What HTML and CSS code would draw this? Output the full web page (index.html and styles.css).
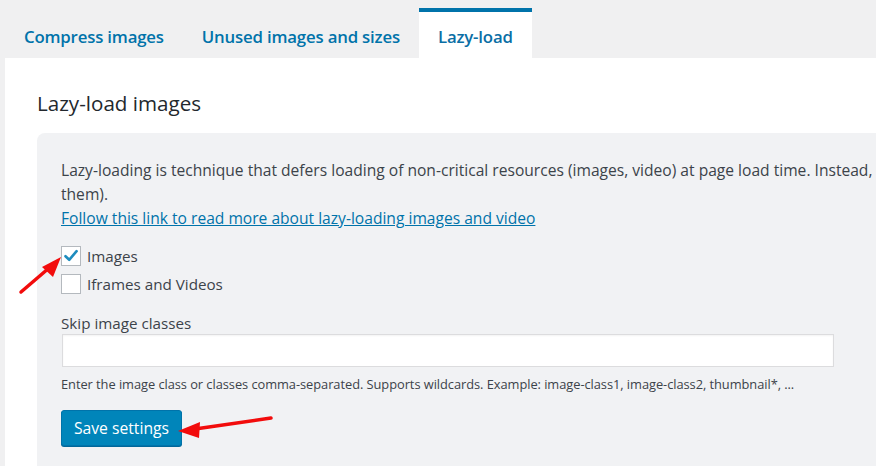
FILE: index.html
```html
<!DOCTYPE html>
<html>
<head>
<meta charset="utf-8">
<link rel="stylesheet" href="styles.css">
</head>
<body>
<div class="page">
  <nav class="tabs">
    <a class="tab">Compress images</a>
    <a class="tab">Unused images and sizes</a>
    <a class="tab active">Lazy-load</a>
  </nav>
  <div class="panel">
    <h2 class="title">Lazy-load images</h2>
    <div class="box">
      <p class="desc"><span class="nowrap">Lazy-loading is technique that defers loading of non-critical resources (images, video) at page load time. Instead, these non-critical resources are loaded at the point they are needed (e.g. the user scrolls down to</span><br>them).<br><a class="link" href="#">Follow this link to read more about lazy-loading images and video</a></p>
      <label class="check"><span class="cb checked"><svg viewBox="0 0 20 20" width="20" height="20"><path d="M4.5 10.2 L8.2 13.8 L15.6 5.2" fill="none" stroke="#1e8cbe" stroke-width="2.6" stroke-linecap="round" stroke-linejoin="round"/></svg></span>Images</label>
      <label class="check"><span class="cb"></span>Iframes and Videos</label>
      <div class="field-label">Skip image classes</div>
      <div class="input"></div>
      <p class="help">Enter the image class or classes comma-separated. Supports wildcards. Example: image-class1, image-class2, thumbnail*, ...</p>
      <button class="btn">Save settings</button>
    </div>
  </div>
  <svg class="arrows" width="876" height="466" viewBox="0 0 876 466">
    <line x1="21" y1="292" x2="49" y2="268" stroke="#f20c0c" stroke-width="3.5" stroke-linecap="round"/>
    <polygon points="61,257 42,267 53,277" fill="#f20c0c"/>
    <line x1="271" y1="418" x2="195" y2="429" stroke="#f20c0c" stroke-width="3.5" stroke-linecap="round"/>
    <polygon points="178,431 200,422 199,438" fill="#f20c0c"/>
  </svg>
</div>
</body>
</html>
```

FILE: styles.css
```css
html, body {
  margin: 0;
  padding: 0;
  background: #f0f0f1;
  overflow: hidden;
}
body {
  font-family: "Open Sans", "Noto Sans", sans-serif;
  color: #3c434a;
  width: 876px;
  height: 466px;
}
.page {
  position: relative;
  width: 876px;
  height: 466px;
  overflow: hidden;
}
.tabs {
  display: flex;
  padding: 8px 0 0 5px;
  height: 58px;
  box-sizing: border-box;
}
.tab {
  display: block;
  padding: 16px 19px 0;
  font-size: 16.8px;
  font-weight: 600;
  color: #0073aa;
  line-height: 26px;
  letter-spacing: -0.18px;
}
.tab.active {
  background: #fff;
  border-top: 4px solid #0073aa;
  padding-top: 12px;
  color: #0a6ea5;
}
.panel {
  background: #fff;
  margin-left: 5px;
  width: 1100px;
  height: 420px;
  padding: 31px 0 0 32px;
  box-sizing: border-box;
}
.title {
  margin: 0 0 16px;
  font-size: 20.6px;
  font-weight: 400;
  line-height: 28px;
  color: #23282d;
}
.box {
  background: #f1f2f4;
  border-radius: 8px 0 0 0;
  padding: 25px 0 0 24px;
  height: 400px;
  box-sizing: border-box;
}
.desc {
  margin: 0 0 12px;
  font-size: 15.6px;
  line-height: 24px;
  color: #3c434a;
}
.nowrap { white-space: nowrap; }
.link {
  color: #0073aa;
  text-decoration: underline;
}
.check {
  display: flex;
  align-items: center;
  height: 28px;
  font-size: 15.2px;
  color: #3c434a;
}
.cb {
  width: 18px;
  height: 18px;
  border: 1px solid #b4b9be;
  background: #fff;
  margin-right: 6px;
  display: flex;
  align-items: center;
  justify-content: center;
  position: relative;
}
.cb svg {
  position: absolute;
  left: -1px;
  top: -1px;
}
.field-label {
  margin-top: 14px;
  font-size: 15.2px;
  line-height: 22px;
  color: #3c434a;
}
.input {
  margin: 0 0 0 1px;
  width: 770px;
  height: 31px;
  background: #fff;
  border: 1px solid #dcdcde;
  box-shadow: inset 0 1px 2px rgba(0,0,0,0.05);
}
.help {
  margin: 7px 0 0;
  font-size: 12.85px;
  line-height: 20px;
  color: #3c434a;
  letter-spacing: -0.05px;
}
.btn {
  margin-top: 16px;
  width: 121px;
  height: 36px;
  background: #0085ba;
  border: 1px solid #0073aa;
  border-radius: 3px;
  box-shadow: 0 1px 0 #006799;
  color: #fff;
  font-family: "Open Sans", "Noto Sans", sans-serif;
  font-size: 15.7px;
  padding: 0;
}
.arrows {
  position: absolute;
  left: 0;
  top: 0;
  pointer-events: none;
}
```
